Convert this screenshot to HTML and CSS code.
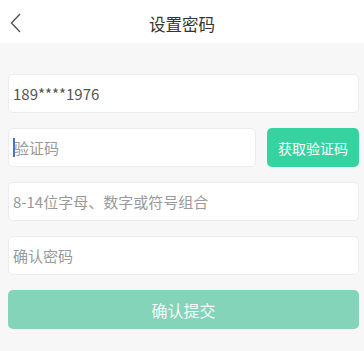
FILE: index.html
```html
<!DOCTYPE html>
<html lang="zh">
<head>
<meta charset="utf-8">
<title>设置密码</title>
<link rel="stylesheet" href="styles.css">
</head>
<body>
<header class="topbar">
  <span class="back">
    <svg width="12" height="20" viewBox="0 0 12 20"><path d="M10 1 L1.5 10 L10 19" fill="none" stroke="#555" stroke-width="1.4"/></svg>
  </span>
  <h1 class="title">设置密码</h1>
</header>
<main class="form">
  <div class="field value">189****1976</div>
  <div class="code-row">
    <div class="field placeholder grow"><span class="caret"></span>验证码</div>
    <div class="code-btn">获取验证码</div>
  </div>
  <div class="field placeholder">8-14位字母、数字或符号组合</div>
  <div class="field placeholder">确认密码</div>
  <div class="submit">确认提交</div>
</main>
</body>
</html>
```
FILE: styles.css
```css
* { box-sizing: border-box; }
html, body { margin: 0; padding: 0; }
body {
  background: #f7f7f7;
  font-family: "Noto Sans CJK SC", "Noto Sans", sans-serif;
  width: 364px;
  height: 351px;
}
.topbar {
  position: relative;
  height: 43px;
  background: #fff;
  display: flex;
  align-items: center;
  justify-content: center;
}
.back {
  position: absolute;
  left: 10px;
  top: 13px;
  display: flex;
}
.title {
  margin: 0;
  padding-top: 4px;
  font-size: 16.5px;
  font-weight: 400;
  color: #333;
}
.form {
  padding: 31px 5px 0 8px;
  display: flex;
  flex-direction: column;
  gap: 15px;
}
.field {
  height: 39px;
  background: #fff;
  border: 1px solid #ececec;
  border-radius: 5px;
  display: flex;
  align-items: center;
  padding-left: 4px;
  font-size: 15px;
}
.value { color: #555; }
.placeholder { color: #999; }
.code-row {
  display: flex;
  gap: 11px;
}
.grow { flex: 1; }
.caret {
  width: 2px;
  height: 19px;
  background: #4b6fd6;
  margin-right: -1px;
}
.code-btn {
  width: 92px;
  height: 39px;
  background: #36d3a0;
  border-radius: 5px;
  color: #fff;
  font-size: 14px;
  display: flex;
  align-items: center;
  justify-content: center;
}
.submit {
  height: 39px;
  background: #83d4b9;
  border-radius: 5px;
  color: #f4fbf8;
  font-size: 16px;
  display: flex;
  align-items: center;
  justify-content: center;
}
```
